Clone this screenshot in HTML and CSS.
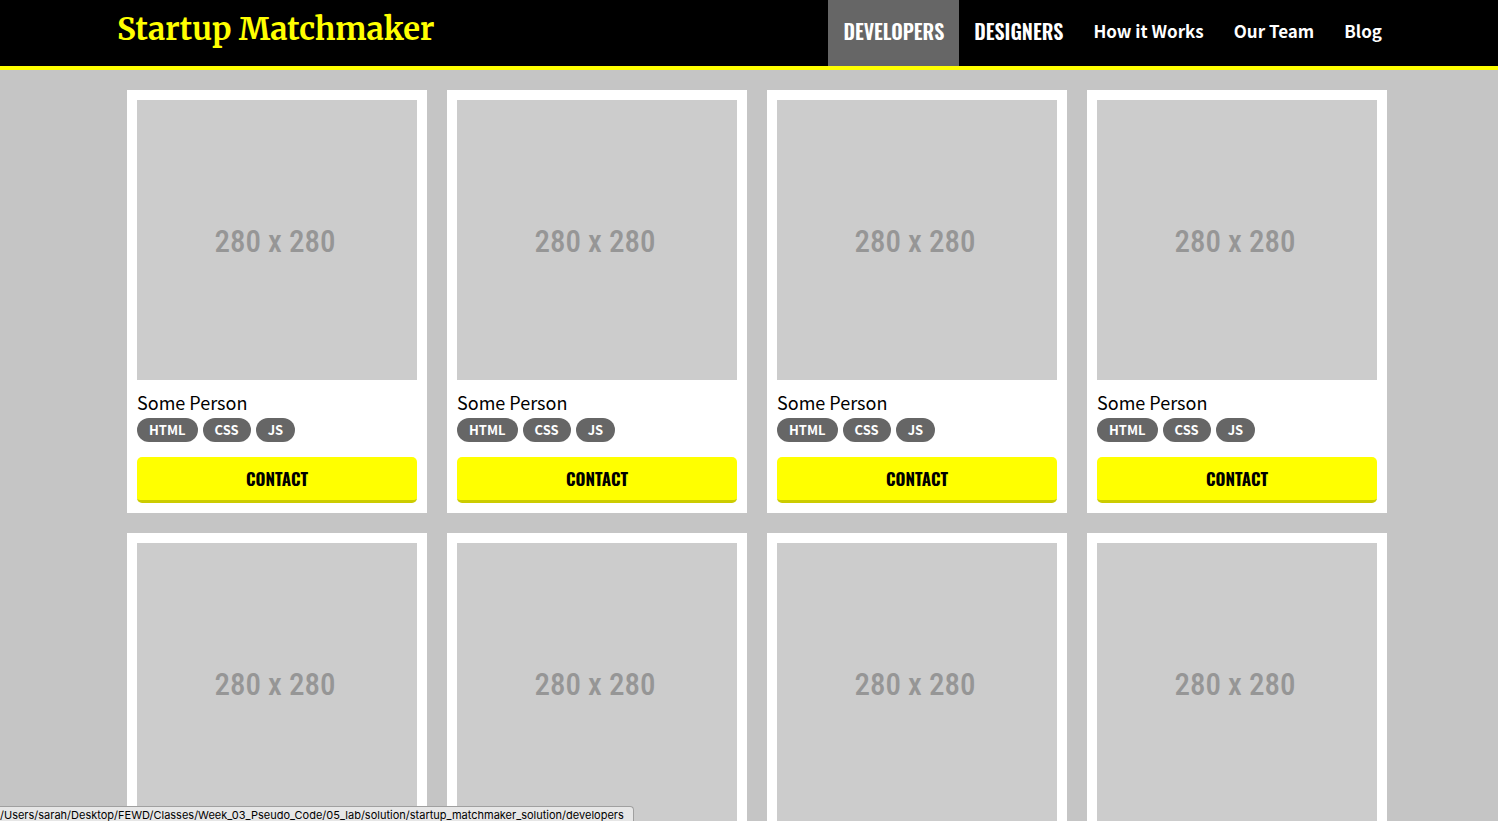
FILE: index.html
```html
<!DOCTYPE html>
<html lang="en">
<head>
<meta charset="utf-8">
<meta name="viewport" content="width=device-width, initial-scale=1">
<title>Startup Matchmaker</title>
<link rel="stylesheet" href="styles.css">
</head>
<body>
<header class="site-header">
  <div class="container header-row">
    <h1 class="logo">Startup Matchmaker</h1>
    <nav class="nav">
      <a class="nav-link nav-link-main nav-link-active" href="#developers">DEVELOPERS</a>
      <a class="nav-link nav-link-main" href="#designers">DESIGNERS</a>
      <a class="nav-link" href="#how">How it Works</a>
      <a class="nav-link" href="#team">Our Team</a>
      <a class="nav-link" href="#blog">Blog</a>
    </nav>
  </div>
</header>
<main class="container grid">
  <article class="card">
    <div class="photo">280 x 280</div>
    <h2 class="name">Some Person</h2>
    <ul class="tags"><li class="tag">HTML</li><li class="tag">CSS</li><li class="tag">JS</li></ul>
    <button class="contact" type="button">CONTACT</button>
  </article>
  <article class="card">
    <div class="photo">280 x 280</div>
    <h2 class="name">Some Person</h2>
    <ul class="tags"><li class="tag">HTML</li><li class="tag">CSS</li><li class="tag">JS</li></ul>
    <button class="contact" type="button">CONTACT</button>
  </article>
  <article class="card">
    <div class="photo">280 x 280</div>
    <h2 class="name">Some Person</h2>
    <ul class="tags"><li class="tag">HTML</li><li class="tag">CSS</li><li class="tag">JS</li></ul>
    <button class="contact" type="button">CONTACT</button>
  </article>
  <article class="card">
    <div class="photo">280 x 280</div>
    <h2 class="name">Some Person</h2>
    <ul class="tags"><li class="tag">HTML</li><li class="tag">CSS</li><li class="tag">JS</li></ul>
    <button class="contact" type="button">CONTACT</button>
  </article>
  <article class="card"><div class="photo">280 x 280</div></article>
  <article class="card"><div class="photo">280 x 280</div></article>
  <article class="card"><div class="photo">280 x 280</div></article>
  <article class="card"><div class="photo">280 x 280</div></article>
</main>
<div class="status">/Users/sarah/Desktop/FEWD/Classes/Week_03_Pseudo_Code/05_lab/solution/startup_matchmaker_solution/developers</div>
</body>
</html>
```
FILE: styles.css
```css
* {
  box-sizing: border-box;
}

body {
  margin: 0;
  background: #c5c5c5;
  color: #000;
  font-family: "Source Sans Pro", "Noto Sans CJK SC", sans-serif;
}

.site-header {
  padding-left: 16px;
  background: #000;
  border-bottom: 4px solid #ff0;
}

.container {
  max-width: 1280px;
  margin: 0 auto;
}

.header-row {
  display: flex;
  justify-content: space-between;
}

.logo {
  margin: 0;
  color: #ff0;
  font: bold 31px/58px Merriweather, "Noto Serif", "Liberation Serif", serif;
  white-space: nowrap;
}

.nav {
  display: flex;
}

.nav-link {
  height: 66px;
  padding: 0 15px;
  color: #fff;
  font-size: 17px;
  font-weight: 700;
  line-height: 62px;
  text-decoration: none;
  white-space: nowrap;
}

.nav-link-main {
  font-family: Oswald, "Roboto Condensed", "Liberation Sans Narrow", sans-serif;
  font-size: 20px;
  font-weight: 600;
}

.nav-link-active {
  background: #666;
}

.grid {
  display: grid;
  grid-template-columns: repeat(4, 1fr);
  gap: 20px;
  max-width: 1296px;
  padding: 20px 10px 20px 26px;
}

.card {
  padding: 10px;
  background: #fff;
}

.photo {
  display: flex;
  align-items: center;
  justify-content: center;
  aspect-ratio: 1;
  padding: 3px 4px 0 0;
  background: #ccc;
  color: #969696;
  font: 500 31px/36px "Roboto Condensed", "Liberation Sans Narrow", sans-serif;
}

.name {
  margin: 10px 0 4px;
  font-size: 18px;
  font-weight: 400;
  line-height: 24px;
}

.tags {
  display: flex;
  gap: 5px;
  margin: 0 0 15px;
  padding: 0;
  list-style: none;
}

.tag {
  padding: 0 12px;
  border-radius: 12px;
  background: #666;
  color: #fff;
  font-size: 13px;
  font-weight: 700;
  line-height: 24px;
}

.contact {
  display: block;
  width: 100%;
  height: 46px;
  padding: 0;
  border: 0;
  border-bottom: 3px solid #cc0;
  border-radius: 5px;
  background: #ff0;
  color: #000;
  font: 700 17px/43px Oswald, "Roboto Condensed", "Liberation Sans Narrow", sans-serif;
}

.status {
  position: fixed;
  bottom: 0;
  left: 0;
  width: 634px;
  height: 15px;
  overflow: hidden;
  border: 1px solid #a0a0a0;
  border-width: 1px 1px 0 0;
  border-top-right-radius: 4px;
  background: #e6e6e6;
  font: 11px/16px Inter, "Liberation Sans", sans-serif;
  white-space: nowrap;
}
```
